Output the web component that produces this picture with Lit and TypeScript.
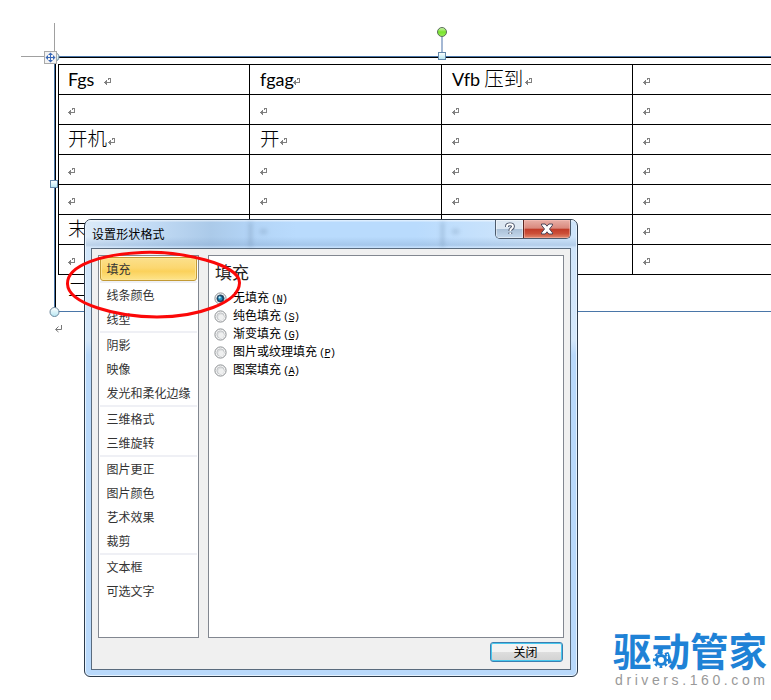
import { LitElement, html, css, svg } from "lit";
import { customElement } from "lit/decorators.js";

type Cell = { text?: string; width?: number };

const rows: Cell[][] = [
  [{ text: "Fgs", width: 36 }, { text: "fgag", width: 33 }, { text: "Vfb 压到", width: 73 }, {}],
  [{}, {}, {}, {}],
  [{ text: "开机", width: 40 }, { text: "开", width: 20 }, {}, {}],
  [{}, {}, {}, {}],
  [{}, {}, {}, {}],
  [{ text: "末", width: 20 }, {}, {}, {}],
  [{}, {}, {}, {}],
];

const groups = [
  ["填充"],
  ["线条颜色", "线型"],
  ["阴影", "映像", "发光和柔化边缘"],
  ["三维格式", "三维旋转"],
  ["图片更正", "图片颜色", "艺术效果", "裁剪"],
  ["文本框", "可选文字"],
];

const options = [
  ["无填充", "N"],
  ["纯色填充", "S"],
  ["渐变填充", "G"],
  ["图片或纹理填充", "P"],
  ["图案填充", "A"],
];

const mark = html`<svg class="mark" width="8" height="8" viewBox="0 0 8 8" shape-rendering="crispEdges">
  <path d="M4 0H7V5H3V4H6V1H5V2H4Z" fill="#808080" />
  <path d="M0 4H1V3H2V2H3V7H2V6H1V5H0Z" fill="#808080" />
</svg>`;

@customElement("word-table")
class WordTable extends LitElement {
  static styles = css`
    :host { display: block; margin: 6px 0 0 2px; width: 770px; }
    .row { display: grid; grid-template-columns: 191px 192px 191px 1fr; height: 30px; }
    .cell { border-top: 1px solid #000; border-left: 1px solid #000; padding-left: 10px; display: flex; box-sizing: border-box; }
    .cell:first-child { padding-left: 9px; }
    .end { border-top: 1px solid #000; }
    .text { font: 19.5px/25px "Noto Sans CJK SC", sans-serif; font-weight: 300; white-space: nowrap; color: #000; height: 25px; }
    .latin { font-family: Lato, "Noto Sans CJK SC", sans-serif; font-weight: 400; font-size: 18px; letter-spacing: -.05px; }
    .mark { margin-top: 13px; flex: none; display: block; }
  `;
  render() {
    return html`${rows.map(
      (r) => html`<div class="row">${r.map(
        (c) => html`<div class="cell">${c.text
          ? html`<span class="text" style="width:${c.width}px">${c.text
              .split(/([A-Za-z]+)/)
              .map((p) => (/[A-Za-z]/.test(p) ? html`<span class="latin">${p}</span>` : p))}</span>`
          : ""}${mark}</div>`
      )}</div>`
    )}<div class="end"></div>`;
  }
}

@customElement("format-dialog")
class FormatDialog extends LitElement {
  static styles = css`
    :host {
      display: flex; flex-direction: column; box-sizing: border-box; width: 494px; height: 458px;
      border: 1px solid #2c3a4a; border-radius: 7px 7px 6px 6px; overflow: hidden; padding: 0 6px 6px;
      background: linear-gradient(#cfe5fb 0, #d4e7fa 120px, #b9d9fb 135px); box-shadow: inset 0 0 0 1px #e6f3ff;
      font: 12px/16px "Noto Sans CJK SC", sans-serif; color: #000; position: relative;
    }
    .title { height: 28px; flex: none; display: flex; margin: 0 -5px; padding: 0 6px 0 5px; position: relative;
      background: linear-gradient(rgba(255,255,255,.5) 0 1px, transparent 2px 60%, rgba(125,160,200,.34) 90%, rgba(205,225,248,.5) 97%),
        linear-gradient(90deg, #dcebf9 0, #c8dff7 50px, #abcae9 125px, #b2d3f5 160px, #b9dbfd 210px, #b9dbfd 330px, #cfe5fb 440px); }
    .title h1 { margin: 0; font: 12px/27px "Noto Sans CJK SC", sans-serif; padding-left: 1px; flex: 1; letter-spacing: .1px; }
    .ghost { position: absolute; top: 2px; height: 25px; width: 3px; background: #6d8aa8; filter: blur(2px); opacity: .4; }
    .g1 { left: 163px; } .g2 { left: 355px; }
    .spot { position: absolute; top: 9px; height: 5px; width: 7px; background: #6d8aa8; filter: blur(2px); opacity: .3; }
    .s1 { left: 174px; } .s2 { left: 366px; }
    .caps { display: flex; height: 19px; box-sizing: border-box; border: 1px solid #4c5a6b; border-top: 0; border-radius: 0 0 5px 5px; overflow: hidden; width: 76px; margin-right: -1px; position: relative; }
    .cap { display: grid; place-items: center; box-sizing: border-box; }
    .help { width: 27px; background: linear-gradient(#dce7f2 0 48%, #a9bfd6 50%, #c5d9ed); box-shadow: inset 0 0 0 1px rgba(255,255,255,.45); }
    .close { flex: 1; border-left: 1px solid #5d2622; background: linear-gradient(#e8b0a8 0, #d9887c 46%, #c03b28 50%, #cc4f38 75%, #e08b70); box-shadow: inset 0 0 0 1px rgba(255,200,190,.45); }
    .body { flex: 1; box-sizing: border-box; border: 1px solid #5a6b7d; background: #f0f0f0; padding: 6px; display: flex; flex-direction: column; }
    .panes { display: flex; gap: 9px; height: 383px; }
    .nav { width: 101px; box-sizing: border-box; border: 1px solid #828790; background: #fff; padding: 1px; }
    .group + .group { border-top: 2px solid #eff0f5; }
    .item { height: 24px; line-height: 24px; padding-left: 6.5px; color: #333; box-sizing: border-box; white-space: nowrap; }
    .selected { border: 1px solid #c29a35; border-radius: 3px; line-height: 22px; padding-left: 5.5px;
      background: linear-gradient(#fbe08c, #fcd770 45%, #fbd15b 60%, #fde48b); box-shadow: inset 0 0 0 1px #fde596; }
    .pane { width: 356px; box-sizing: border-box; border: 1px solid #828790; background: #fff; padding: 2px 4.5px; }
    h2 { margin: 0 0 4px 1.5px; font: 400 17px/27px "Noto Sans CJK SC", sans-serif; color: #222; }
    .option { display: flex; align-items: center; height: 18px; gap: 6.5px; white-space: nowrap; }
    .radio { width: 13px; height: 13px; flex: none; }
    .key { font: 10.5px/16px "Liberation Mono", monospace; letter-spacing: -.9px; margin-left: 2px; }
    .foot { display: flex; justify-content: flex-end; padding: 4px 1px 0 0; }
    button { width: 73px; height: 20px; padding: 0 2px 0 0; box-sizing: border-box; border: 1px solid #3c7fb1; border-radius: 3px;
      background: linear-gradient(#f3f3f3 0 48%, #dedede 50%, #d2d2d2); box-shadow: inset 0 0 0 1px #48c8ee;
      font: 12px/16px "Noto Sans CJK SC", sans-serif; color: #000; }
  `;
  render() {
    return html`
      <div class="title">
        <i class="ghost g1"></i><i class="ghost g2"></i><i class="spot s1"></i><i class="spot s2"></i>
        <h1>设置形状格式</h1>
        <div class="caps">
          <div class="cap help"><svg width="12" height="14" viewBox="0 0 12 14" fill="none" stroke-linejoin="round">
            <path d="M3 5V4Q3 2.3 6 2.3T9 4.3Q9 5.8 7.5 6.6Q6.3 7.3 6.3 9M6.3 10.4V12" stroke="#4c566b" stroke-width="3.8" />
            <path d="M3 5V4Q3 2.3 6 2.3T9 4.3Q9 5.8 7.5 6.6Q6.3 7.3 6.3 9M6.3 10.4V12" stroke="#fff" stroke-width="1.9" />
          </svg></div>
          <div class="cap close"><svg width="14" height="12" viewBox="0 0 14 12">
            <path d="M1.5 1H5.2L7 3.2L8.8 1H12.5V2.2L9.5 6L12.5 9.8V11H8.8L7 8.8L5.2 11H1.5V9.8L4.5 6L1.5 2.2Z" fill="#fff" stroke="#4c4658" />
          </svg></div>
        </div>
      </div>
      <div class="body">
        <div class="panes">
          <div class="nav">${groups.map((g, i) => html`<div class="group">${g.map(
            (t) => html`<div class="item ${i === 0 ? "selected" : ""}">${t}</div>`)}</div>`)}</div>
          <div class="pane">
            <h2>填充</h2>
            ${options.map(([label, key], i) => html`<div class="option">
              <svg class="radio" viewBox="0 0 13 13">
                <circle cx="6.5" cy="6.5" r="5.6" fill="#f6f6f6" stroke="#8b8f92" />
                <circle cx="6.5" cy="6.5" r="3.7" fill=${i ? "#d9dbdc" : "#173c5c"} stroke=${i ? "#b9bcbf" : "#3b5d78"} stroke-width=".7" />
                ${i ? svg`<circle cx="7.1" cy="7.2" r="2.8" fill="#eff0f0" />` : svg`<circle cx="6.3" cy="6.5" r="2.2" fill="#218ebc" /><circle cx="5.6" cy="5.4" r="1.1" fill="#b9ecfb" />`}
              </svg>
              <span>${label}<span class="key">(<u>${key}</u>)</span></span>
            </div>`)}
          </div>
        </div>
        <div class="foot"><button>关闭</button></div>
      </div>`;
  }
}

@customElement("app-root")
class AppRoot extends LitElement {
  static styles = css`
    :host { display: block; width: 771px; height: 700px; position: relative; overflow: hidden; background: #fff; }
    .frame { margin: 56px 0 0 54px; box-sizing: border-box; width: 800px; height: 256px; border: 1px solid #4a76a8; box-shadow: inset 1px 1px #000; padding: 1px; display: flow-root; }
    .rest { font: 300 19px/28px "Noto Sans CJK SC", sans-serif; padding-left: 12px; }
    .overlay { position: absolute; inset: 0; width: 771px; height: 700px; }
    format-dialog { position: absolute; left: 84px; top: 219px; }
    .brand { position: absolute; left: 613px; top: 629px; width: 160px; }
    .name { font: 700 38.5px/40px "Noto Sans CJK SC", sans-serif; color: #1f82d6; position: relative; white-space: nowrap; height: 43px; }
    .gear { position: absolute; left: 38px; top: 21px; }
    .site { font: 14px/16px "Liberation Sans", sans-serif; letter-spacing: 3.6px; color: #999; padding-left: 2px; white-space: nowrap; }
  `;
  render() {
    return html`
      <div class="frame"><word-table></word-table><div class="rest">二</div></div>
      <svg class="overlay" viewBox="0 0 771 700" fill="none">
        <defs>
          <linearGradient id="h" x1="0" y1="0" x2="0" y2="1"><stop stop-color="#fff" /><stop offset="1" stop-color="#b5e6f2" /></linearGradient>
          <linearGradient id="g" x1="0" y1="0" x2="0" y2="1"><stop stop-color="#d4f7b8" /><stop offset=".5" stop-color="#78e32d" /><stop offset="1" stop-color="#9cf05d" /></linearGradient>
        </defs>
        <path d="M54.5 23V52M21 56.5H45" stroke="#a0a0a0" />
        <circle cx="54.5" cy="57" r="4.5" fill="url(#h)" stroke="#6c879c" />
        <rect x="44.5" y="51.5" width="12" height="12" fill="#f3f3f3" stroke="#aaa" />
        <path d="M46 57.5H55M50.5 53V62" stroke="#3a69b8" />
        <path d="M50.5 52.5L53 55H48ZM50.5 62.5L53 60H48ZM45.5 57.5L48 55V60ZM55.5 57.5L53 55V60Z" fill="#3a69b8" />
        <path d="M442 37V53" stroke="#a4b8d4" stroke-width="2" />
        <circle cx="442" cy="32" r="4.5" fill="url(#g)" stroke="#5b6f5a" />
        <rect x="438.5" y="52.5" width="7" height="7" fill="url(#h)" stroke="#6488aa" />
        <rect x="50.5" y="180.5" width="7" height="7" fill="url(#h)" stroke="#6488aa" />
        <circle cx="54.5" cy="312" r="4.5" fill="url(#h)" stroke="#6c879c" />
        <path d="M61.5 325V329.5H56M58.5 326.5L55.5 329.5L58.5 332" stroke="#777" />
      </svg>
      <format-dialog></format-dialog>
      <svg class="overlay" viewBox="0 0 771 700" fill="none">
        <path d="M142 252.5C181 251 240 264 239.5 283C239 303 197 317 157 317C118 317 68 304 67.5 284C67 265 103 254 142 252.5Z" stroke="#fb0808" stroke-width="3" />
      </svg>
      <div class="brand">
        <div class="name">驱动管家<svg class="gear" width="20" height="20" viewBox="-10 -10 20 20">
          <rect x="-10" y="-6" width="17" height="16" fill="#fff" />
          <circle r="4.5" fill="none" stroke="#1f82d6" stroke-width="3" />
          <circle r="6.8" fill="none" stroke="#1f82d6" stroke-width="2.6" stroke-dasharray="2.67" stroke-dashoffset="1.335" />
        </svg></div>
        <div class="site">drivers.160.com</div>
      </div>`;
  }
}
